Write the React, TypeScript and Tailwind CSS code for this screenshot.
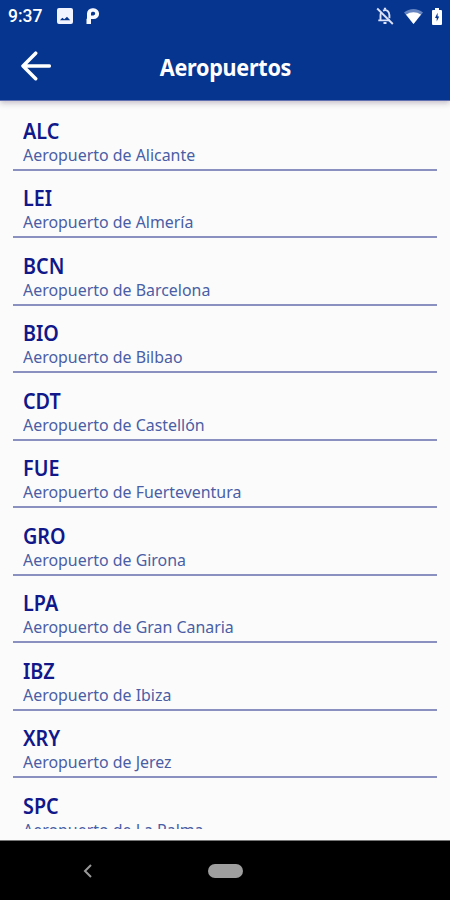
type Airport = {
  code: string;
  name: string;
};

const airports: Airport[] = [
  { code: "ALC", name: "Aeropuerto de Alicante" },
  { code: "LEI", name: "Aeropuerto de Almería" },
  { code: "BCN", name: "Aeropuerto de Barcelona" },
  { code: "BIO", name: "Aeropuerto de Bilbao" },
  { code: "CDT", name: "Aeropuerto de Castellón" },
  { code: "FUE", name: "Aeropuerto de Fuerteventura" },
  { code: "GRO", name: "Aeropuerto de Girona" },
  { code: "LPA", name: "Aeropuerto de Gran Canaria" },
  { code: "IBZ", name: "Aeropuerto de Ibiza" },
  { code: "XRY", name: "Aeropuerto de Jerez" },
  { code: "SPC", name: "Aeropuerto de La Palma" },
];

function StatusBar() {
  return (
    <div className="flex h-8 items-center pl-2 pr-[8px] text-white">
      <span className="w-[35px] font-['Roboto',sans-serif] text-[17.5px] leading-8 font-medium whitespace-nowrap">9:37</span>
      {/* Picture notification */}
      <svg className="ml-[14px] h-4 w-4" viewBox="0 0 16 16" fill="#f1f3ff">
        <path fillRule="evenodd" d="M2 0h12a2 2 0 0 1 2 2v12a2 2 0 0 1-2 2H2a2 2 0 0 1-2-2V2a2 2 0 0 1 2-2ZM3 12.3h10.2L10 8.7l-2.7 2.5-2-1.5Z" />
      </svg>
      <svg className="ml-[13px] h-4 w-[14px]" viewBox="0 0 14 16" fill="#f8f9ff">
        <path fillRule="evenodd" d="M1 5.5A5.3 5.3 0 0 1 6.3.3h1.4a5.4 5.4 0 0 1 0 10.8H5V16H.5v-5.2H1ZM5 5.4v2h2.4a1.8 1.8 0 0 0 0-3.6H6.5A1.6 1.6 0 0 0 5 5.4Z" />
      </svg>
      <div className="flex-1" />
      {/* Muted bell */}
      <svg className="h-[18px] w-[18px]" viewBox="0 0 18 18" fill="none" stroke="#dce2fa" strokeWidth="1.9">
        <path d="M5.2 5.2C4.6 6.2 4.5 7.2 4.5 8.5V13M2.3 13.4H14M7 3.6c3.8-1.6 6.4 1 6.4 4.4v3.2" />
        <path d="M9 .8v2M7.5 16h3" strokeWidth="2.2" />
        <path d="M1.2 1.5 16.8 17" />
      </svg>
      <svg className="ml-[10px] h-[15px] w-[19px]" viewBox="0 0 19 15">
        <path d="M0 3.6C5.5-1.1 13.5-1.1 19 3.6L9.5 15Z" fill="#6685c1" />
        <path d="M2 5.6C6.5 2.3 12.5 2.3 17 5.6L9.5 15Z" fill="#fff" />
      </svg>
      <svg className="ml-[9px] h-[17px] w-[10px]" viewBox="0 0 10 17">
        <path d="M3 0h4v2h2a1 1 0 0 1 1 1v13a1 1 0 0 1-1 1H1a1 1 0 0 1-1-1V3a1 1 0 0 1 1-1h2Z" fill="#fff" />
        <path d="M5.6 4.8 3 10h1.7v3.6L7.2 8.4H5.6Z" fill="#06358f" />
      </svg>
    </div>
  );
}

function Header() {
  return (
    <div className="relative z-10 h-[101px] shrink-0 border-b border-[#5f6fb0] bg-[#06358f] shadow-[0_2px_6px_rgba(60,40,70,0.3)]">
      <StatusBar />
      <div className="grid h-[68px] grid-cols-[72px_1fr_72px] items-center text-white">
        <svg className="ml-[21px] h-[30px] w-[30px]" viewBox="0 0 30 30" fill="none" stroke="currentColor" strokeWidth="3.5" strokeLinecap="round" strokeLinejoin="round">
          <path d="M28.3 15H2.2M14.7 2.2 2 15l12.7 12.7" />
        </svg>
        <h1 className="origin-center scale-x-[0.96] pt-[3px] pl-px text-center text-[22.5px] leading-[30px] font-bold tracking-[-0.3px]">Aeropuertos</h1>
      </div>
    </div>
  );
}

function AirportRow({ code, name }: Airport) {
  return (
    <li className="h-[67.5px] border-b-2 border-[#8a90bf] pt-[13.5px] pl-[10px]">
      <div className="origin-left scale-x-[0.92] text-[21.5px] leading-[27px] font-semibold text-[#10188a]">{code}</div>
      <div className="mt-px origin-left scale-x-[0.995] text-[16px] leading-[20px] whitespace-nowrap text-[#4a5ea5]">{name}</div>
    </li>
  );
}

export default function App() {
  return (
    <div className="flex h-[900px] w-[450px] flex-col overflow-hidden bg-[#fbfbfb] font-['Noto_Sans',sans-serif]">
      <Header />
      <ul className="mx-[13px] h-[728px] shrink-0 overflow-hidden pt-[2px]">
        {airports.map((airport) => (
          <AirportRow key={airport.code} {...airport} />
        ))}
      </ul>
      {/* System navigation */}
      <div className="mt-auto grid h-[60px] shrink-0 grid-cols-[175px_100px_175px] place-items-center border-t border-[#777] bg-black">
        <svg className="h-[14px] w-[9px]" viewBox="0 0 9 14" fill="none" stroke="#999" strokeWidth="2">
          <path d="M8 1 2 7l6 6" />
        </svg>
        <div className="h-[14px] w-[35px] rounded-full bg-[#9e9e9e]" />
      </div>
    </div>
  );
}
